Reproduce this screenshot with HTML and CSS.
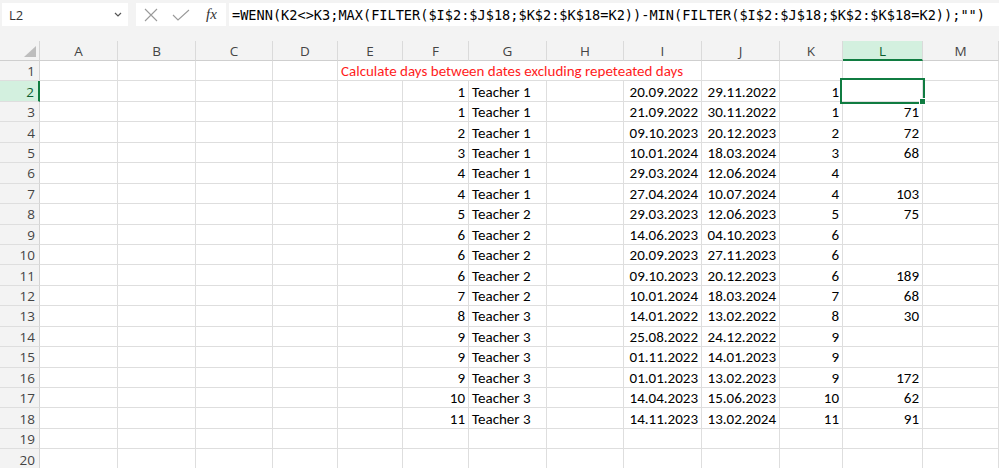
FILE: index.html
```html
<!DOCTYPE html>
<html lang="de">
  <head>
    <meta charset="UTF-8" />
    <title>Mappe1 - Excel</title>
    <link rel="stylesheet" href="styles.css">
  </head>
  <body>
    <div class="formula-bar">
      <div class="name-box">
        <span>L2</span>
        <svg width="8" height="5" viewBox="0 0 8 5"><path d="M1 1l3 3 3-3" fill="none" stroke="#555" stroke-width="1.2"/></svg>
      </div>
      <div class="fx-box">
        <svg class="icon-x" width="14" height="14" viewBox="0 0 14 14"><path d="M1 1L13 13M13 1L1 13" stroke="#9a9a9a" stroke-width="1.1"/></svg>
        <svg class="icon-check" width="18" height="12" viewBox="0 0 18 12"><path d="M1 6l5 5L17 1" fill="none" stroke="#9a9a9a" stroke-width="1.1"/></svg>
        <span class="fx">fx</span>
      </div>
      <div class="formula">=WENN(K2&lt;&gt;K3;MAX(FILTER($I$2:$J$18;$K$2:$K$18=K2))-MIN(FILTER($I$2:$J$18;$K$2:$K$18=K2));"")</div>
    </div>

    <div class="sheet">
      <!-- column headers -->
      <div class="corner"><span class="corner-tri"></span></div>
      <div class="col-h">A</div><div class="col-h">B</div><div class="col-h">C</div><div class="col-h">D</div>
      <div class="col-h">E</div><div class="col-h">F</div><div class="col-h">G</div><div class="col-h">H</div>
      <div class="col-h">I</div><div class="col-h">J</div><div class="col-h">K</div><div class="col-h sel">L</div>
      <div class="col-h">M</div>

      <!-- row 1 -->
      <div class="row-h">1</div><div></div><div></div><div></div><div></div>
      <div class="note">Calculate days between dates excluding repeteated days</div>
      <div></div><div></div><div></div><div></div>

      <!-- row 2 -->
      <div class="row-h sel">2</div><div></div><div></div><div></div><div></div><div></div>
      <div class="num">1</div><div>Teacher 1</div><div></div><div class="num">20.09.2022</div><div class="num">29.11.2022</div><div class="num">1</div><div class="num active"></div><div></div>

      <div class="row-h">3</div><div></div><div></div><div></div><div></div><div></div>
      <div class="num">1</div><div>Teacher 1</div><div></div><div class="num">21.09.2022</div><div class="num">30.11.2022</div><div class="num">1</div><div class="num">71</div><div></div>

      <div class="row-h">4</div><div></div><div></div><div></div><div></div><div></div>
      <div class="num">2</div><div>Teacher 1</div><div></div><div class="num">09.10.2023</div><div class="num">20.12.2023</div><div class="num">2</div><div class="num">72</div><div></div>

      <div class="row-h">5</div><div></div><div></div><div></div><div></div><div></div>
      <div class="num">3</div><div>Teacher 1</div><div></div><div class="num">10.01.2024</div><div class="num">18.03.2024</div><div class="num">3</div><div class="num">68</div><div></div>

      <div class="row-h">6</div><div></div><div></div><div></div><div></div><div></div>
      <div class="num">4</div><div>Teacher 1</div><div></div><div class="num">29.03.2024</div><div class="num">12.06.2024</div><div class="num">4</div><div class="num"></div><div></div>

      <div class="row-h">7</div><div></div><div></div><div></div><div></div><div></div>
      <div class="num">4</div><div>Teacher 1</div><div></div><div class="num">27.04.2024</div><div class="num">10.07.2024</div><div class="num">4</div><div class="num">103</div><div></div>

      <div class="row-h">8</div><div></div><div></div><div></div><div></div><div></div>
      <div class="num">5</div><div>Teacher 2</div><div></div><div class="num">29.03.2023</div><div class="num">12.06.2023</div><div class="num">5</div><div class="num">75</div><div></div>

      <div class="row-h">9</div><div></div><div></div><div></div><div></div><div></div>
      <div class="num">6</div><div>Teacher 2</div><div></div><div class="num">14.06.2023</div><div class="num">04.10.2023</div><div class="num">6</div><div class="num"></div><div></div>

      <div class="row-h">10</div><div></div><div></div><div></div><div></div><div></div>
      <div class="num">6</div><div>Teacher 2</div><div></div><div class="num">20.09.2023</div><div class="num">27.11.2023</div><div class="num">6</div><div class="num"></div><div></div>

      <div class="row-h">11</div><div></div><div></div><div></div><div></div><div></div>
      <div class="num">6</div><div>Teacher 2</div><div></div><div class="num">09.10.2023</div><div class="num">20.12.2023</div><div class="num">6</div><div class="num">189</div><div></div>

      <div class="row-h">12</div><div></div><div></div><div></div><div></div><div></div>
      <div class="num">7</div><div>Teacher 2</div><div></div><div class="num">10.01.2024</div><div class="num">18.03.2024</div><div class="num">7</div><div class="num">68</div><div></div>

      <div class="row-h">13</div><div></div><div></div><div></div><div></div><div></div>
      <div class="num">8</div><div>Teacher 3</div><div></div><div class="num">14.01.2022</div><div class="num">13.02.2022</div><div class="num">8</div><div class="num">30</div><div></div>

      <div class="row-h">14</div><div></div><div></div><div></div><div></div><div></div>
      <div class="num">9</div><div>Teacher 3</div><div></div><div class="num">25.08.2022</div><div class="num">24.12.2022</div><div class="num">9</div><div class="num"></div><div></div>

      <div class="row-h">15</div><div></div><div></div><div></div><div></div><div></div>
      <div class="num">9</div><div>Teacher 3</div><div></div><div class="num">01.11.2022</div><div class="num">14.01.2023</div><div class="num">9</div><div class="num"></div><div></div>

      <div class="row-h">16</div><div></div><div></div><div></div><div></div><div></div>
      <div class="num">9</div><div>Teacher 3</div><div></div><div class="num">01.01.2023</div><div class="num">13.02.2023</div><div class="num">9</div><div class="num">172</div><div></div>

      <div class="row-h">17</div><div></div><div></div><div></div><div></div><div></div>
      <div class="num">10</div><div>Teacher 3</div><div></div><div class="num">14.04.2023</div><div class="num">15.06.2023</div><div class="num">10</div><div class="num">62</div><div></div>

      <div class="row-h">18</div><div></div><div></div><div></div><div></div><div></div>
      <div class="num">11</div><div>Teacher 3</div><div></div><div class="num">14.11.2023</div><div class="num">13.02.2024</div><div class="num">11</div><div class="num">91</div><div></div>

      <div class="row-h">19</div><div></div><div></div><div></div><div></div><div></div>
      <div></div><div></div><div></div><div></div><div></div><div></div><div></div><div></div>

      <div class="row-h">20</div><div></div><div></div><div></div><div></div><div></div>
      <div></div><div></div><div></div><div></div><div></div><div></div><div></div><div></div>
    </div>
  </body>
</html>
```

FILE: styles.css
```css
/* Page: light grey app chrome */
body {
  margin: 0;
  background: #f3f3f3;
  font-family: Carlito, Calibri, "Liberation Sans", sans-serif;
  color: #000;
  overflow: hidden;
}

/* Name box + fx + formula input */
.formula-bar {
  display: flex;
  align-items: flex-start;
  height: 41px;
  padding: 3px 0 0 2px;
  box-sizing: border-box;
}

.name-box {
  width: 126px;
  height: 23px;
  background: #fff;
  display: flex;
  align-items: center;
  justify-content: space-between;
  padding: 0 6px 0 7px;
  box-sizing: border-box;
  font-family: "Open Sans", "Liberation Sans", sans-serif;
  font-size: 13px;
  color: #333;
}

.fx-box {
  margin-left: 8px;
  width: 90px;
  height: 23px;
  background: #fff;
  display: flex;
  align-items: center;
  padding-left: 8px;
  box-sizing: border-box;
}

.icon-check {
  margin-left: 14px;
}

.fx {
  margin-left: 16px;
  font-family: "Liberation Serif", serif;
  font-style: italic;
  font-size: 15px;
  color: #333;
}

.formula {
  margin-left: 3px;
  flex: 1;
  height: 23px;
  background: #fff;
  padding-left: 3px;
  box-sizing: border-box;
  font-family: "DejaVu Sans Mono", monospace;
  font-size: 13.6px;
  line-height: 24px;
  white-space: nowrap;
  overflow: hidden;
}

/* Worksheet grid */
.sheet {
  display: grid;
  grid-template-columns: 40px 78px 78px 77px 65px 65px 66px 78px 77px 78px 78px 63px 80px 1fr;
  grid-template-rows: 20px;
  grid-auto-rows: 20.44px;
}

.sheet > div {
  background: #fff;
  border-right: 1px solid #dedede;
  border-bottom: 1px solid #dedede;
  box-sizing: border-box;
  display: flex;
  align-items: center;
  padding: 1px 3px 0;
  font-size: 15px;
  white-space: nowrap;
  min-width: 0;
}

.sheet > .num {
  justify-content: flex-end;
}

/* Column and row headers */
.sheet > .corner,
.sheet > .col-h,
.sheet > .row-h {
  background: #f3f3f3;
  color: #444;
  font-family: "Open Sans", "Liberation Sans", sans-serif;
  font-size: 13.5px;
}

.sheet > .corner {
  position: relative;
  border-right: 1px solid #d4d4d4;
  border-bottom: 1px solid #cfcfcf;
}

.corner-tri {
  position: absolute;
  right: 3px;
  bottom: 3px;
  width: 0;
  height: 0;
  border-left: 12px solid transparent;
  border-bottom: 11px solid #bdbdbd;
}

.sheet > .col-h {
  justify-content: center;
  border-right: 1px solid #dadada;
  border-bottom: 1px solid #cfcfcf;
}

.sheet > .row-h {
  justify-content: flex-end;
  padding-right: 4px;
  border-right: 1px solid #d4d4d4;
}

/* Selected column L and row 2 */
.sheet > .col-h.sel {
  background: #d3f0df;
  color: #0c5e2f;
  border-bottom: 2px solid #107c41;
}

.sheet > .row-h.sel {
  background: #d3f0df;
  color: #0c5e2f;
  border-right: 2px solid #107c41;
}

/* Red note in row 1 spills over E..I */
.sheet > .note {
  grid-column: span 5;
  color: #ff1c1c;
}

/* Active cell L2 */
.sheet > .active {
  position: relative;
  z-index: 1;
  outline: 2px solid #107c41;
  outline-offset: 0;
  margin: -1px 0 0 -1px;
}

.active::after {
  content: "";
  position: absolute;
  right: -4px;
  bottom: -4px;
  width: 5px;
  height: 5px;
  background: #107c41;
  border: 1px solid #fff;
}
```
